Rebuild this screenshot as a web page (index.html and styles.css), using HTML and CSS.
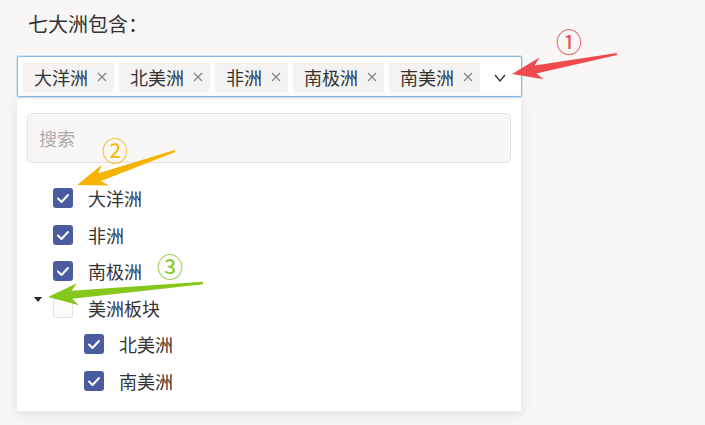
FILE: index.html
```html
<!DOCTYPE html>
<html lang="zh-CN">
<head>
<meta charset="utf-8">
<title>七大洲包含</title>
<link rel="stylesheet" href="styles.css">
</head>
<body>
<div class="page">
  <div class="field-label">七大洲包含：</div>
  <div class="select">
    <div class="select-box">
      <span class="tag"><span class="tag-text">大洋洲</span><svg class="tag-close" viewBox="0 0 10 10"><path d="M1 1L9 9M9 1L1 9"/></svg></span>
      <span class="tag"><span class="tag-text">北美洲</span><svg class="tag-close" viewBox="0 0 10 10"><path d="M1 1L9 9M9 1L1 9"/></svg></span>
      <span class="tag"><span class="tag-text">非洲</span><svg class="tag-close" viewBox="0 0 10 10"><path d="M1 1L9 9M9 1L1 9"/></svg></span>
      <span class="tag"><span class="tag-text">南极洲</span><svg class="tag-close" viewBox="0 0 10 10"><path d="M1 1L9 9M9 1L1 9"/></svg></span>
      <span class="tag"><span class="tag-text">南美洲</span><svg class="tag-close" viewBox="0 0 10 10"><path d="M1 1L9 9M9 1L1 9"/></svg></span>
      <svg class="chevron" viewBox="0 0 12 8"><path d="M1 1L6 7L11 1"/></svg>
    </div>
    <div class="dropdown">
      <input class="search" type="text" placeholder="搜索">
      <ul class="tree">
        <li class="row"><span class="toggle"></span><span class="cb checked"><svg viewBox="0 0 20 20"><path d="M5 10.5L8.5 14L15 7"/></svg></span><span class="row-label">大洋洲</span></li>
        <li class="row"><span class="toggle"></span><span class="cb checked"><svg viewBox="0 0 20 20"><path d="M5 10.5L8.5 14L15 7"/></svg></span><span class="row-label">非洲</span></li>
        <li class="row"><span class="toggle"></span><span class="cb checked"><svg viewBox="0 0 20 20"><path d="M5 10.5L8.5 14L15 7"/></svg></span><span class="row-label">南极洲</span></li>
        <li class="row"><span class="toggle"><span class="caret"></span></span><span class="cb"></span><span class="row-label">美洲板块</span></li>
        <li class="row child"><span class="toggle"></span><span class="cb checked"><svg viewBox="0 0 20 20"><path d="M5 10.5L8.5 14L15 7"/></svg></span><span class="row-label">北美洲</span></li>
        <li class="row child"><span class="toggle"></span><span class="cb checked"><svg viewBox="0 0 20 20"><path d="M5 10.5L8.5 14L15 7"/></svg></span><span class="row-label">南美洲</span></li>
      </ul>
    </div>
  </div>
</div>
<svg class="annotations" viewBox="0 0 705 425">
  <polygon class="arrow-red" points="512,74 543.6,79.2 536.3,73.4 617.2,55 616.8,53 534.8,65.6 539.4,57.6"/>
  <polygon class="arrow-yellow" points="77,185 109,185.6 101,180.9 175.3,152 174.7,150 98.4,173.3 101.8,164.8"/>
  <polygon class="arrow-green" points="48,297 78.9,305.3 72.3,298.8 203.1,284.2 202.9,281.8 71.5,290.8 76.9,283.3"/>
  <text class="num num-red" x="569" y="52">①</text>
  <text class="num num-yellow" x="115" y="161">②</text>
  <text class="num num-green" x="170" y="277">③</text>
</svg>
</body>
</html>
```
FILE: styles.css
```css
html, body {
  margin: 0;
  padding: 0;
}

body {
  width: 705px;
  height: 425px;
  overflow: hidden;
  position: relative;
  background: #f8f7f6;
  font-family: "Noto Sans CJK SC", "Noto Sans", sans-serif;
  color: #333;
}

.page {
  padding: 11px 0 0 17px;
}

.field-label {
  font-size: 20px;
  line-height: 26px;
  margin-left: 11px;
  color: #333;
}

.select {
  margin-top: 19px;
  width: 505px;
}

.select-box {
  height: 41px;
  box-sizing: border-box;
  border: 1px solid #86b9e6;
  border-radius: 2px;
  background: #fefefe;
  box-shadow: 0 0 0 1px rgba(134, 185, 230, 0.3);
  display: flex;
  align-items: center;
  gap: 5px;
  padding-left: 5px;
}

.tag {
  height: 30px;
  display: inline-flex;
  align-items: center;
  padding: 0 7px 0 11px;
  background: #f4f3f1;
  border-radius: 2px;
  font-size: 18px;
  line-height: 30px;
  color: #333;
}

.tag-close {
  width: 10px;
  height: 10px;
  margin-left: 9px;
  fill: none;
  stroke: #808080;
  stroke-width: 1.1;
}

.chevron {
  width: 12px;
  height: 8px;
  margin-left: 9px;
  margin-top: 2px;
  fill: none;
  stroke: #333;
  stroke-width: 1.3;
}

.dropdown {
  width: 504px;
  box-sizing: border-box;
  margin-top: 2px;
  background: #fff;
  box-shadow: 0 3px 12px rgba(0, 0, 0, 0.1);
  padding: 14px 10px 12px;
}

.search {
  display: block;
  width: 100%;
  height: 50px;
  box-sizing: border-box;
  margin: 0;
  border: 1px solid #e4e2df;
  border-radius: 5px;
  background: #f8f7f6;
  padding: 0 0 0 11px;
  font-family: "Noto Sans CJK SC", "Noto Sans", sans-serif;
  font-size: 18px;
  color: #333;
  outline: none;
}

.search::placeholder {
  color: #ababab;
}

.tree {
  list-style: none;
  margin: 17px 0 0;
  padding: 0;
}

.row {
  height: 36.5px;
  display: flex;
  align-items: center;
  padding-left: 7px;
  font-size: 18px;
  color: #333;
}

.row.child {
  padding-left: 38px;
}

.toggle {
  width: 19px;
  height: 100%;
  flex: none;
}

.caret {
  display: block;
  width: 0;
  height: 0;
  margin-top: 7px;
  border-left: 4px solid transparent;
  border-right: 4px solid transparent;
  border-top: 5px solid #222;
}

.cb {
  width: 20px;
  height: 20px;
  flex: none;
  box-sizing: border-box;
  border-radius: 3px;
  border: 1px solid #e4e2df;
  background: #fcfbfa;
}

.cb.checked {
  border: none;
  background: #4a5ba0;
}

.cb svg {
  display: block;
  width: 20px;
  height: 20px;
  fill: none;
  stroke: #fff;
  stroke-width: 2;
  stroke-linecap: round;
  stroke-linejoin: round;
}

.row-label {
  margin-left: 15px;
  line-height: 24px;
}

.annotations {
  position: absolute;
  top: 0;
  left: 0;
  width: 705px;
  height: 425px;
  pointer-events: none;
}

.arrow-red { fill: #ef4a4f; }
.arrow-yellow { fill: #f6b400; }
.arrow-green { fill: #86c71c; }

.num {
  font-family: "Noto Sans CJK SC", "DejaVu Sans", sans-serif;
  font-size: 26px;
  text-anchor: middle;
}

.num-red { fill: #ef4a4f; }
.num-yellow { fill: #f6b400; }
.num-green { fill: #86c71c; }
```
